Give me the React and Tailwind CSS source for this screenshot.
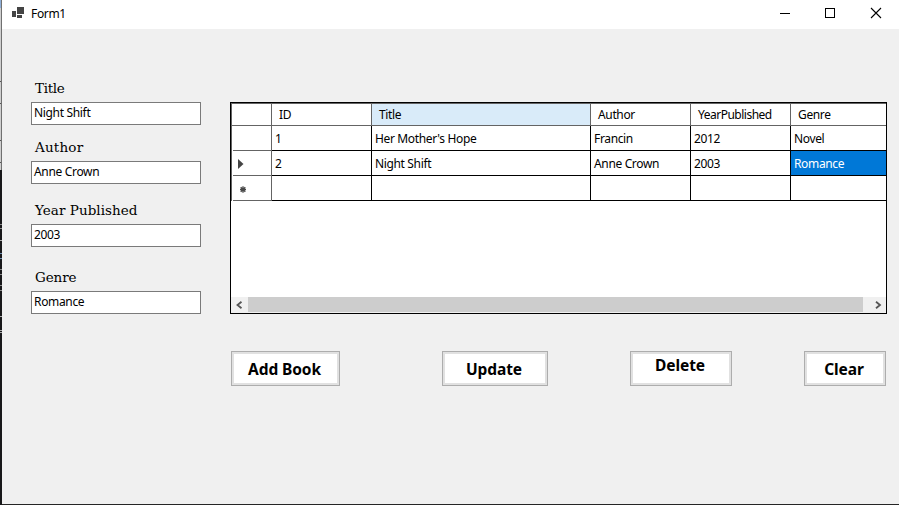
import React from "react";

const ui = "font-['Noto_Sans','Open_Sans',sans-serif]";

function Field({ label, value, className, labelClass }) {
  return (
    <label className={`flex flex-col ${className || ""}`}>
      <span className={`h-[23px] pl-1 font-['DejaVu_Serif',serif] text-[13.5px] leading-[19px] whitespace-nowrap ${labelClass}`}>
        <span>{label}</span>
      </span>
      <span className="flex h-[23px] w-[170px] border border-[#7a7a7a] bg-white pl-[2px] text-[12px] leading-[20px] tracking-[-0.33px] whitespace-nowrap">
        <span>{value}</span>
      </span>
    </label>
  );
}

const widths = ["w-[100px]", "w-[219px]", "w-[100px]", "w-[100px]", "w-[95px]"];
const columns = ["ID", "Title", "Author", "YearPublished", "Genre"];
const rows = [
  { mark: "", cells: ["1", "Her Mother's Hope", "Francin", "2012", "Novel"] },
  { mark: "current", cells: ["2", "Night Shift", "Anne Crown", "2003", "Romance"] },
  { mark: "new", cells: ["", "", "", "", ""] },
];

function RowMark({ kind }) {
  if (kind === "current")
    return (
      <svg className="mt-[2px] ml-[5px]" width="6" height="10">
        <path d="M0 0L5.5 5L0 10Z" fill="#444" />
      </svg>
    );
  if (kind === "new")
    return (
      <svg className="mt-[3px] ml-[7px]" width="6" height="7">
        <path d="M3 .3V6.7M0 3.5H6M.7 1.2L5.3 5.8M5.3 1.2L.7 5.8" stroke="#484848" strokeWidth="1.3" />
      </svg>
    );
  return null;
}

function Grid() {
  return (
    <div className="flex h-[212px] w-[657px] flex-col border border-black bg-white text-[12px] tracking-[-0.35px] whitespace-nowrap">
      <div className="flex h-[23px] border-t border-b border-[#646464]">
        <div className="w-[41px] border-r border-l border-[#646464]" />
        {columns.map((c, i) => (
          <div
            key={c}
            className={`${widths[i]} flex items-center pl-[7px] ${i < 4 ? "border-r border-[#646464]" : ""} ${i === 1 ? "bg-[#d9ebf9]" : ""} ${i === 3 ? "tracking-[-0.5px]" : ""}`}
          >
            <span>{c}</span>
          </div>
        ))}
      </div>
      {rows.map((r, n) => (
        <div key={n} className="flex h-[25px]">
          <div className="flex w-[41px] border-r border-l border-[#646464] pl-px">
            <div className="flex w-full items-center border-b border-[#646464]">
              <RowMark kind={r.mark} />
            </div>
          </div>
          {r.cells.map((c, i) => (
            <div
              key={i}
              className={`${widths[i]} flex items-center border-b border-black pt-[2px] pl-[3px] ${i < 4 ? "border-r" : ""} ${c === "Romance" ? "bg-[#0078d7] text-white" : ""}`}
            >
              <span>{c}</span>
            </div>
          ))}
        </div>
      ))}
      <div className="mt-auto flex h-4 bg-[#f0f0f0]">
        <div className="flex w-[17px] items-center pl-[5px]">
          <svg width="7" height="8">
            <path d="M5.5 .7L1.5 4L5.5 7.3" fill="none" stroke="#555" strokeWidth="1.8" />
          </svg>
        </div>
        <div className="h-[15px] w-[615px] bg-[#cdcdcd]" />
        <div className="flex flex-1 items-center pl-[12px]">
          <svg width="7" height="8">
            <path d="M1 .7L5 4L1 7.3" fill="none" stroke="#555" strokeWidth="1.8" />
          </svg>
        </div>
      </div>
    </div>
  );
}

function Button({ children, className }) {
  return (
    <button className={`h-[35px] border border-[#adadad] bg-[#e1e1e1] p-[2px] text-[15.5px] font-bold tracking-[-0.1px] whitespace-nowrap ${className}`}>
      <div className="flex h-full items-center justify-center bg-white pr-[2px]">{children}</div>
    </button>
  );
}

function Backdrop() {
  return (
    <div className="flex h-[505px] w-[2px] flex-col bg-[#18181a]">
      <div className="flex h-[170px]">
        <div className="flex w-px flex-col bg-[#cfcfcf]">
          <div className="h-2 bg-[#8fafd8]" />
          <div className="mt-[73px] h-px bg-[#555]" />
          <div className="mt-[21px] h-px bg-[#555]" />
          <div className="mt-[36px] h-px bg-[#555]" />
          <div className="mt-[21px] h-px bg-[#555]" />
        </div>
        <div className="w-px bg-[#707070]" />
      </div>
      <div className="mt-[54px] h-px bg-[#8a8a8a]" />
      <div className="mt-[3px] h-px bg-[#8a8a8a]" />
      <div className="mt-[11px] h-px bg-[#aaa]" />
      <div className="mt-[12px] h-px bg-[#6f8fb0]" />
      <div className="mt-[4px] h-px bg-[#6f8fb0]" />
      <div className="mt-[10px] h-px bg-[#8a8a8a]" />
      <div className="mt-[4px] h-px bg-[#8a8a8a]" />
      <div className="mt-[10px] h-px bg-[#8a8a8a]" />
      <div className="mt-[4px] h-px bg-[#8a8a8a]" />
      <div className="mt-[25px] h-px bg-[#aaa]" />
      <div className="mt-[13px] h-px bg-[#aaa]" />
      <div className="mt-px h-px bg-[#aaa]" />
    </div>
  );
}

export default function App() {
  return (
    <div className={`flex h-[505px] w-[899px] overflow-hidden text-black ${ui}`}>
      <Backdrop />
      <div className="flex w-[897px] flex-col border-b border-[#252525] bg-[#f0f0f0]">
        <header className="flex h-[29px] items-start bg-white">
          <svg className="mt-[7px] ml-[10px]" width="12" height="11" shapeRendering="crispEdges">
            <path d="M5 0H12V7H5ZM0 4H4V10H0ZM5 8H10V11H5Z" fill="#444" />
          </svg>
          <span className="ml-[7px] text-[12px] leading-[27px] tracking-[-0.35px]">Form1</span>
          <svg className="ml-auto" width="119" height="28" fill="none" stroke="#000">
            <path d="M0 13.5H10" />
            <path d="M45.5 8.5H54.5V17.5H45.5Z" shapeRendering="crispEdges" />
            <path d="M91 8L101 18M101 8L91 18" strokeWidth="1.1" />
          </svg>
        </header>
        <main className="flex pl-[29px]">
          <section className="flex w-[199px] flex-col pt-[50px]">
            <Field label="Title" value="Night Shift" labelClass="tracking-[-0.3px]" />
            <Field label="Author" value="Anne Crown" className="mt-[13px]" labelClass="tracking-[0.2px]" />
            <Field label="Year Published" value="2003" className="mt-[17px]" labelClass="tracking-[0.05px]" />
            <Field label="Genre" value="Romance" className="mt-[21px]" labelClass="tracking-[-0.1px]" />
          </section>
          <section className="flex w-[657px] flex-col pt-[73px]">
            <Grid />
            <div className="mt-[37px] flex pl-px">
              <Button className="w-[109px]"><span className="mt-[2px]">Add Book</span></Button>
              <Button className="ml-[102px] w-[106px]"><span className="mt-[2px]">Update</span></Button>
              <Button className="ml-[82px] w-[102px]"><span className="mb-[6px]">Delete</span></Button>
              <Button className="ml-[72px] w-[82px]"><span className="mt-[2px]">Clear</span></Button>
            </div>
          </section>
        </main>
      </div>
    </div>
  );
}
